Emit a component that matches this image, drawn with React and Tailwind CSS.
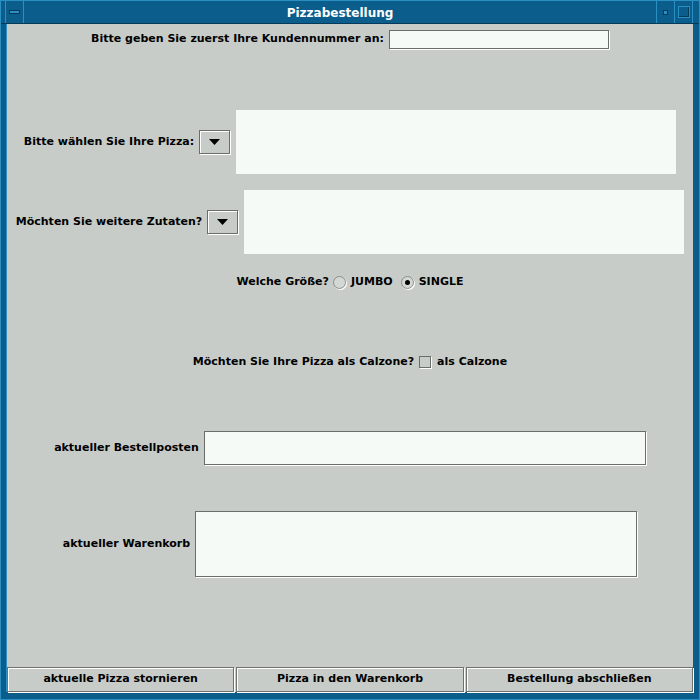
import React from "react";

const font = { fontFamily: '"DejaVu Sans", "Liberation Sans", sans-serif' };

function Field({ w, h, className = "" }) {
  return (
    <div
      className={`border border-[#6a6e6a] bg-[#f6faf6] shadow-[1px_1px_0_#ffffff] ${className}`}
      style={{ width: w, height: h }}
    />
  );
}

function Combo() {
  return (
    <div className="w-[31px] h-[24px] border border-[#6a6e6a] shadow-[1px_1px_0_#ffffff,inset_1px_1px_0_#ffffff] bg-[#c8ccc8] flex items-center justify-center">
      <svg width="11" height="6" viewBox="0 0 11 6">
        <polygon points="0,0 11,0 5.5,6" fill="#000" />
      </svg>
    </div>
  );
}

function Radio({ checked }) {
  return (
    <div className="w-[13px] h-[13px] rounded-full border border-[#8a8e8a] shadow-[1px_1px_0_#ffffff] bg-[#d4d8d4] flex items-center justify-center">
      {checked && <div className="w-[5px] h-[5px] rounded-full bg-black" />}
    </div>
  );
}

function Button({ children }) {
  return (
    <div className="h-[25px] border border-[#6e726e] shadow-[inset_1px_1px_0_#ffffff,1px_1px_0_#ffffff] bg-[#c8ccc8] flex items-center justify-center text-[11px] font-bold text-black">
      {children}
    </div>
  );
}

export default function App() {
  return (
    <div
      className="w-[700px] h-[700px] bg-[#0b5d8b] flex flex-col border border-[#2c8fc3] overflow-hidden"
      style={font}
    >
      {/* Title bar */}
      <div className="h-[23px] flex border-b border-[#053a58]">
        <div className="w-[5px] border-r border-[#2c8fc3]" />
        <div className="w-[18px] border-r border-[#2c8fc3] flex items-center justify-center">
          <div className="w-[11px] h-[4px] bg-[#2c8fc3] border border-[#053a58]" />
        </div>
        <div className="flex-1 flex items-center justify-center text-white text-[12px] font-bold pt-[1px]">
          Pizzabestellung
        </div>
        <div className="w-[18px] border-l border-[#2c8fc3] flex items-center justify-center">
          <div className="w-[5px] h-[5px] bg-[#2c8fc3] border border-[#053a58]" />
        </div>
        <div className="w-[18px] border-l border-[#2c8fc3] flex items-center justify-center">
          <div className="w-[12px] h-[12px] border border-[#2c8fc3] shadow-[inset_-1px_-1px_0_#053a58]" />
        </div>
        <div className="w-[7px] border-l border-[#2c8fc3]" />
      </div>

      {/* Body */}
      <div className="flex-1 flex pl-[5px] pr-[6px] pb-[7px]">
        <div className="flex-1 bg-[#c8ccc8] flex flex-col text-[11px] font-bold text-black border-l border-[#2c8fc3]">
          {/* Row 1 */}
          <div className="mt-[6px] flex items-center justify-center gap-[5px]">
            <span>Bitte geben Sie zuerst Ihre Kundennummer an:</span>
            <Field w={220} h={19} />
          </div>

          {/* Row 2 */}
          <div className="mt-[61px] flex items-center justify-center gap-[5px]">
            <span>Bitte wählen Sie Ihre Pizza:</span>
            <Combo />
            <div className="ml-[1px] w-[440px] h-[64px] bg-[#f6faf6]" />
          </div>

          {/* Row 3 */}
          <div className="mt-[16px] flex items-center justify-center gap-[5px]">
            <span>Möchten Sie weitere Zutaten?</span>
            <Combo />
            <div className="ml-[1px] w-[440px] h-[64px] bg-[#f6faf6]" />
          </div>

          {/* Row 4 */}
          <div className="mt-[20px] h-[16px] flex items-center justify-center">
            <span>Welche Größe?</span>
            <div className="ml-[4px]"><Radio /></div>
            <span className="ml-[5px]">JUMBO</span>
            <div className="ml-[8px]"><Radio checked /></div>
            <span className="ml-[5px]">SINGLE</span>
          </div>

          {/* Row 5 */}
          <div className="mt-[64px] h-[16px] flex items-center justify-center">
            <span>Möchten Sie Ihre Pizza als Calzone?</span>
            <div className="ml-[5px] w-[12px] h-[12px] border border-[#6a6e6a] shadow-[1px_1px_0_#ffffff] bg-[#c8ccc8]" />
            <span className="ml-[6px]">als Calzone</span>
          </div>

          {/* Row 6 */}
          <div className="mt-[61px] flex items-center justify-center gap-[5px]">
            <span>aktueller Bestellposten</span>
            <Field w={442} h={34} />
          </div>

          {/* Row 7 */}
          <div className="mt-[46px] flex items-center justify-center gap-[5px]">
            <span>aktueller Warenkorb</span>
            <Field w={442} h={66} />
          </div>

          {/* Buttons */}
          <div className="mt-auto grid grid-cols-3 gap-[2px]">
            <Button>aktuelle Pizza stornieren</Button>
            <Button>Pizza in den Warenkorb</Button>
            <Button>Bestellung abschließen</Button>
          </div>
        </div>
      </div>
    </div>
  );
}
